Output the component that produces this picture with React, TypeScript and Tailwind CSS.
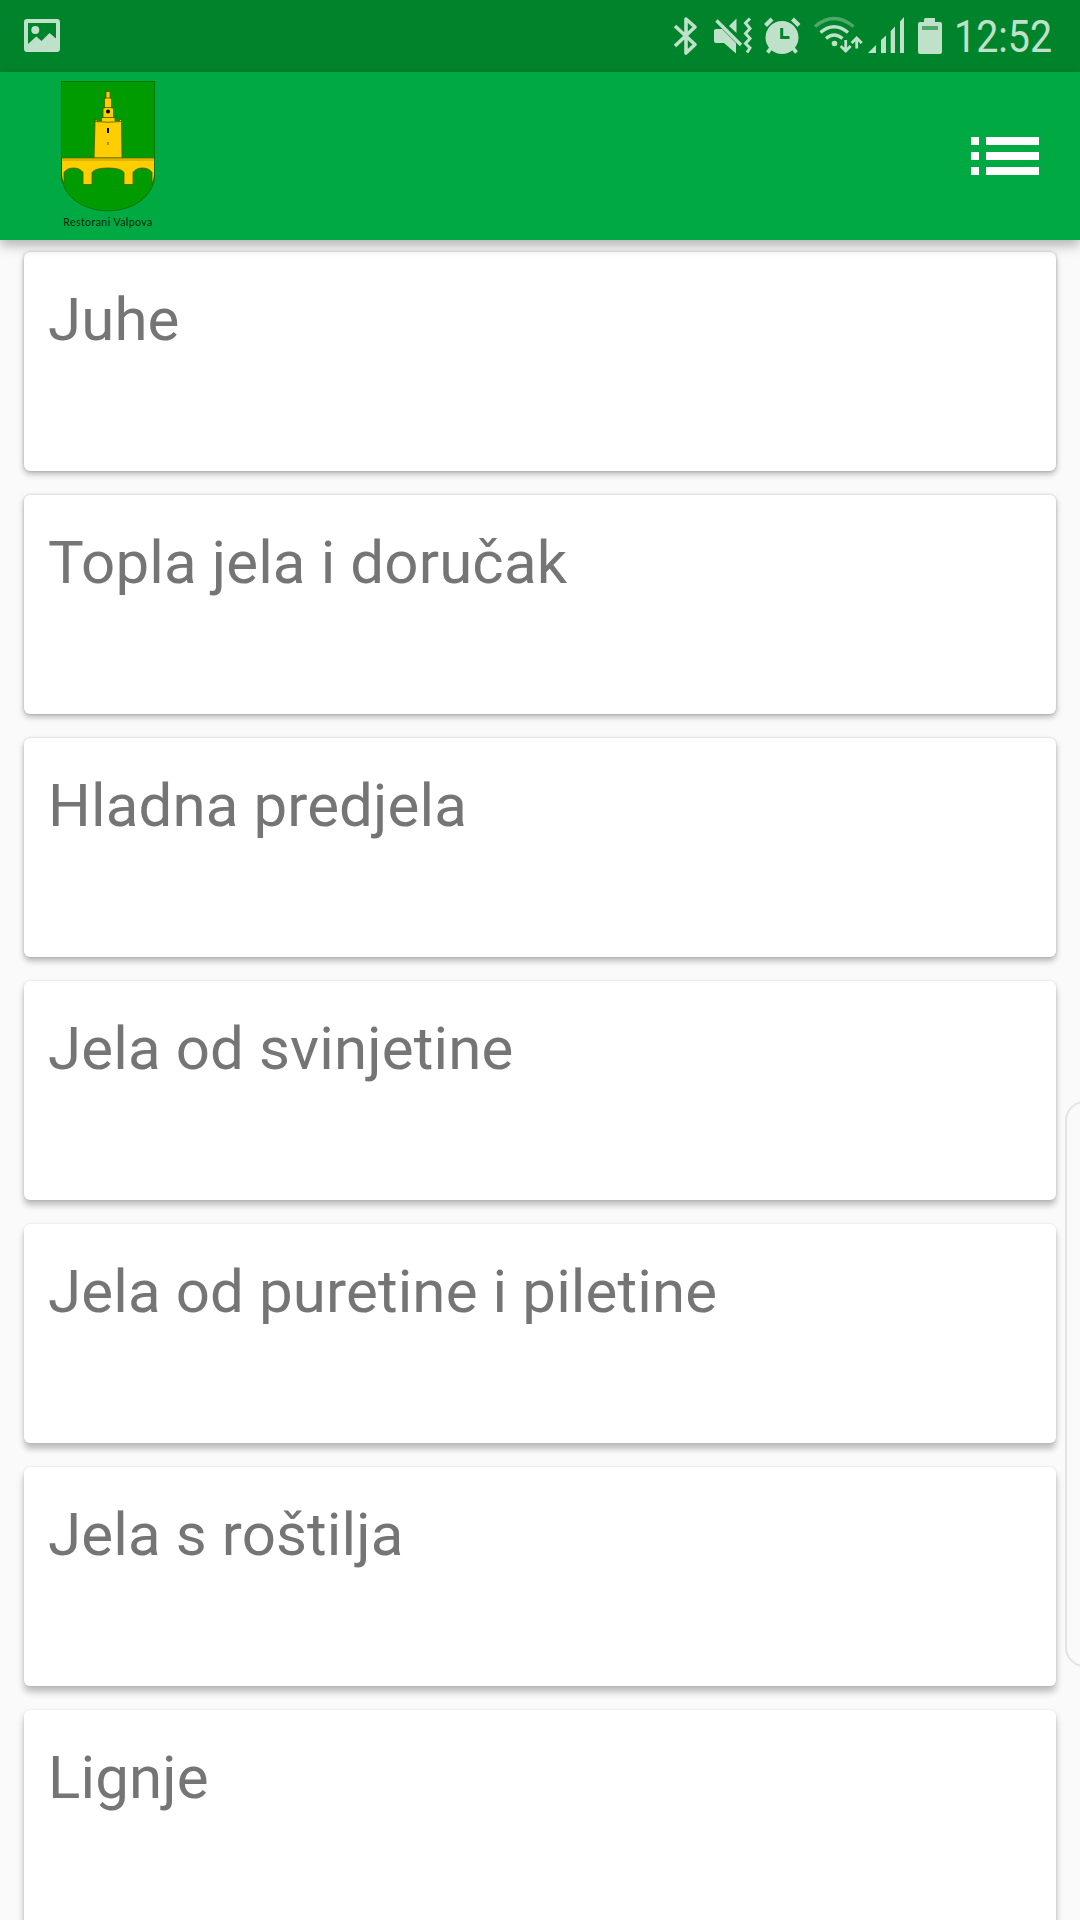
const dishes = [
  'Juhe',
  'Topla jela i doručak',
  'Hladna predjela',
  'Jela od svinjetine',
  'Jela od puretine i piletine',
  'Jela s roštilja',
  'Lignje',
];

function PictureIcon() {
  return (
    <svg className="ml-6 h-[72px] w-9" viewBox="0 0 36 72" fill="#bfe1ca">
      <path
        fillRule="evenodd"
        d="M3 19H33Q36 19 36 22V49Q36 52 33 52H3Q0 52 0 49V22Q0 19 3 19ZM4 23V44L12.3 36.5L17.5 41L25.5 33L32 38.5V23Z"
      />
      <circle cx="11.3" cy="30" r="4" />
    </svg>
  );
}

function BluetoothIcon() {
  return (
    <svg className="h-[72px] w-10" viewBox="668 0 40 72" fill="none" stroke="#bfe1ca" strokeWidth="3.6">
      <path d="M675 26L695 44.5L686 53V19L695 27L675 46" strokeLinejoin="round" />
    </svg>
  );
}

function MuteIcon() {
  return (
    <svg className="h-[72px] w-[49px]" viewBox="708 0 49 72" fill="#bfe1ca">
      <path d="M716 29H722L736 43V53.5L724 43H716Q714 43 714 41V31Q714 29 716 29Z" />
      <path d="M736.500 18.500V33L729 26Z" />
      <path d="M716.500 20.500L741 45" stroke="#bfe1ca" strokeWidth="3.400" />
      <path
        d="M750 18.500L745.500 23L750 28.500L745.500 33.500L750 38.500L745.500 43.500L750 48L747 52.500"
        fill="none"
        stroke="#bfe1ca"
        strokeWidth="3"
      />
    </svg>
  );
}

function AlarmIcon() {
  return (
    <svg className="h-[72px] w-[51px]" viewBox="757 0 51 72" fill="none" stroke="#bfe1ca">
      <circle cx="782" cy="37.500" r="16.500" fill="#bfe1ca" stroke="none" />
      <path d="M765.500 25.500L772 19M792.500 19L799 25.500" strokeWidth="4.200" />
      <path d="M772 47L767.500 52.500M792 47L796.500 52.500" strokeWidth="3.600" />
      <path d="M781.700 28V37.600H789.500" stroke="#00842b" strokeWidth="3" />
    </svg>
  );
}

function WifiIcon() {
  return (
    <svg className="h-[72px] w-[58px]" viewBox="808 0 58 72" fill="none" stroke="#bfe1ca" strokeWidth="3.300">
      <path d="M815 26.500Q834 10.500 853.500 26.500" stroke="#4fa96b" />
      <path d="M820.500 32.500Q834 21 848 32.500" />
      <path d="M826 38.500Q834 31.500 842.500 38.500" />
      <circle cx="834.500" cy="43.500" r="2.800" fill="#bfe1ca" stroke="none" />
      <path d="M845.700 40V50M840.700 46L845.700 51L850.700 46M856.700 48.500V38.500M851.700 43L856.700 38L861.700 43" strokeWidth="2.800" />
    </svg>
  );
}

function SignalIcon() {
  return (
    <svg className="h-[72px] w-11" viewBox="866 0 44 72" fill="#bfe1ca">
      <path d="M868 53L876 45V53ZM881 53V40L886 35.500V53ZM890.700 53V31L895 26.500V53ZM900 53V21.500L904 17V53Z" />
    </svg>
  );
}

function BatteryIcon() {
  return (
    <svg className="h-[72px] w-[38px]" viewBox="910 0 38 72" fill="#bfe1ca">
      <path d="M925 18H935V22H940Q942 22 942 24V52Q942 54 940 54H920Q918 54 918 52V24Q918 22 920 22H924V19Z" />
      <path d="M922 26H938V30H922Z" fill="#4fa96b" />
    </svg>
  );
}

function CrestLogo() {
  return (
    <svg className="block h-[132px] w-[94px]" viewBox="0 0 94 132">
      <path d="M0 0H94V93C94 115 72 130 47 130S0 115 0 93Z" fill="#009b00" />
      <g fill="#ffce00" stroke="#4b5a00" strokeWidth=".8">
        <path d="M33 77L34 41.500V38L37 40H40.500V36.500H42V27H43.500V17H45V10.500H49V17H50.500V27H52.500V36.500H54V40H58L60.500 37.500V41.500L61 77Z" />
        <path d="M34 37.500V40.500Q47 42 60.500 40.500V37.500" fill="none" />
        <path d="M43 17H51M42 26.500H53M41 36.500H54" fill="none" />
        <path d="M.400 77H93.600V93Q93.600 98 91 102.500V91.500Q88 87 81.500 87Q75 87 72 91.500V103.500H63V91.500Q60 87 47 87Q34 87 31 91.500V103.500H22V91.500Q19 87 12.500 87Q6 87 3 91.500V102.500Q.400 98 .400 93Z" />
      </g>
      <path d="M0 79H94" stroke="#b89c00" />
      <circle cx="47" cy="30.500" r="2" />
      <path d="M46 47H48V52H46Z" />
      <path d="M46.300 61H47.800V64H46.300Z" fill="#8d7b00" />
      <path d="M.4 .4H93.600V93C93.600 115 72 129.800 47 129.800S.400 115 .400 93Z" fill="none" stroke="#00690b" strokeWidth=".8" />
    </svg>
  );
}

function MenuIcon() {
  return (
    <svg className="h-[38px] w-[68px]" viewBox="0 0 68 38" fill="#fff">
      <path d="M0 0H8V8H0ZM15 0H68V8H15ZM0 15H8V23H0ZM15 15H68V23H15ZM0 30H8V38H0ZM15 30H68V38H15Z" />
    </svg>
  );
}

const shadows = [
  'shadow-[0_3px_6px_rgba(0,0,0,0.28),0_0_3px_rgba(0,0,0,0.2)]',
  'shadow-[0_3px_6px_rgba(0,0,0,0.28),0_0_3px_rgba(0,0,0,0.18)]',
  'shadow-[0_4px_6px_rgba(0,0,0,0.27),0_0_3px_rgba(0,0,0,0.15)]',
  'shadow-[0_5px_6px_rgba(0,0,0,0.25),0_0_3px_rgba(0,0,0,0.12)]',
  'shadow-[0_6px_6px_rgba(0,0,0,0.24),0_0_3px_rgba(0,0,0,0.11)]',
  'shadow-[0_6px_7px_rgba(0,0,0,0.25),0_0_3px_rgba(0,0,0,0.1)]',
  'shadow-[0_6px_7px_rgba(0,0,0,0.25),0_0_3px_rgba(0,0,0,0.1)]',
];

export default function App() {
  return (
    <div className="relative flex h-[1920px] w-[1080px] flex-col overflow-hidden bg-[#fafafa] font-[Roboto,sans-serif]">
      <div className="z-10 flex h-[72px] shrink-0 items-center bg-[#00842b]">
        <PictureIcon />
        <div className="ml-auto flex h-full w-[412px] items-center">
          <BluetoothIcon />
          <MuteIcon />
          <AlarmIcon />
          <WifiIcon />
          <SignalIcon />
          <BatteryIcon />
          <span className="ml-[6px] origin-left scale-x-[0.875] pt-[2px] text-[45px] leading-[72px] whitespace-nowrap text-[#bfe1ca]">
            12:52
          </span>
        </div>
      </div>
      <header className="z-10 flex h-[168px] shrink-0 items-start justify-between bg-[#00a941] pr-[41px] pl-[61px] shadow-[0_5px_12px_rgba(0,0,0,0.3)]">
        <div className="flex w-[94px] flex-col items-center pt-[9px]">
          <CrestLogo />
          <span className="mt-[2px] text-[10.500px] leading-[14px] tracking-[0.45px] whitespace-nowrap text-[#06250c] font-['Lato',sans-serif]">
            Restorani Valpova
          </span>
        </div>
        <button aria-label="Menu" className="mt-[65px]">
          <MenuIcon />
        </button>
      </header>
      <main className="flex flex-col gap-6 px-6 pt-3">
        {dishes.map((dish, i) => (
          <section key={dish} className={`h-[219px] shrink-0 rounded-[6px] bg-white px-6 pt-[33px] ${shadows[i]}`}>
            <h2 className="text-[60px] leading-[70px] tracking-[0.13px] text-[#757575]">{dish}</h2>
          </section>
        ))}
      </main>
      <div className="absolute top-[1101px] -right-6 h-[566px] w-[39px] rounded-[20px] border-2 border-[#e4e4e4] bg-[#fafafa]" />
    </div>
  );
}
